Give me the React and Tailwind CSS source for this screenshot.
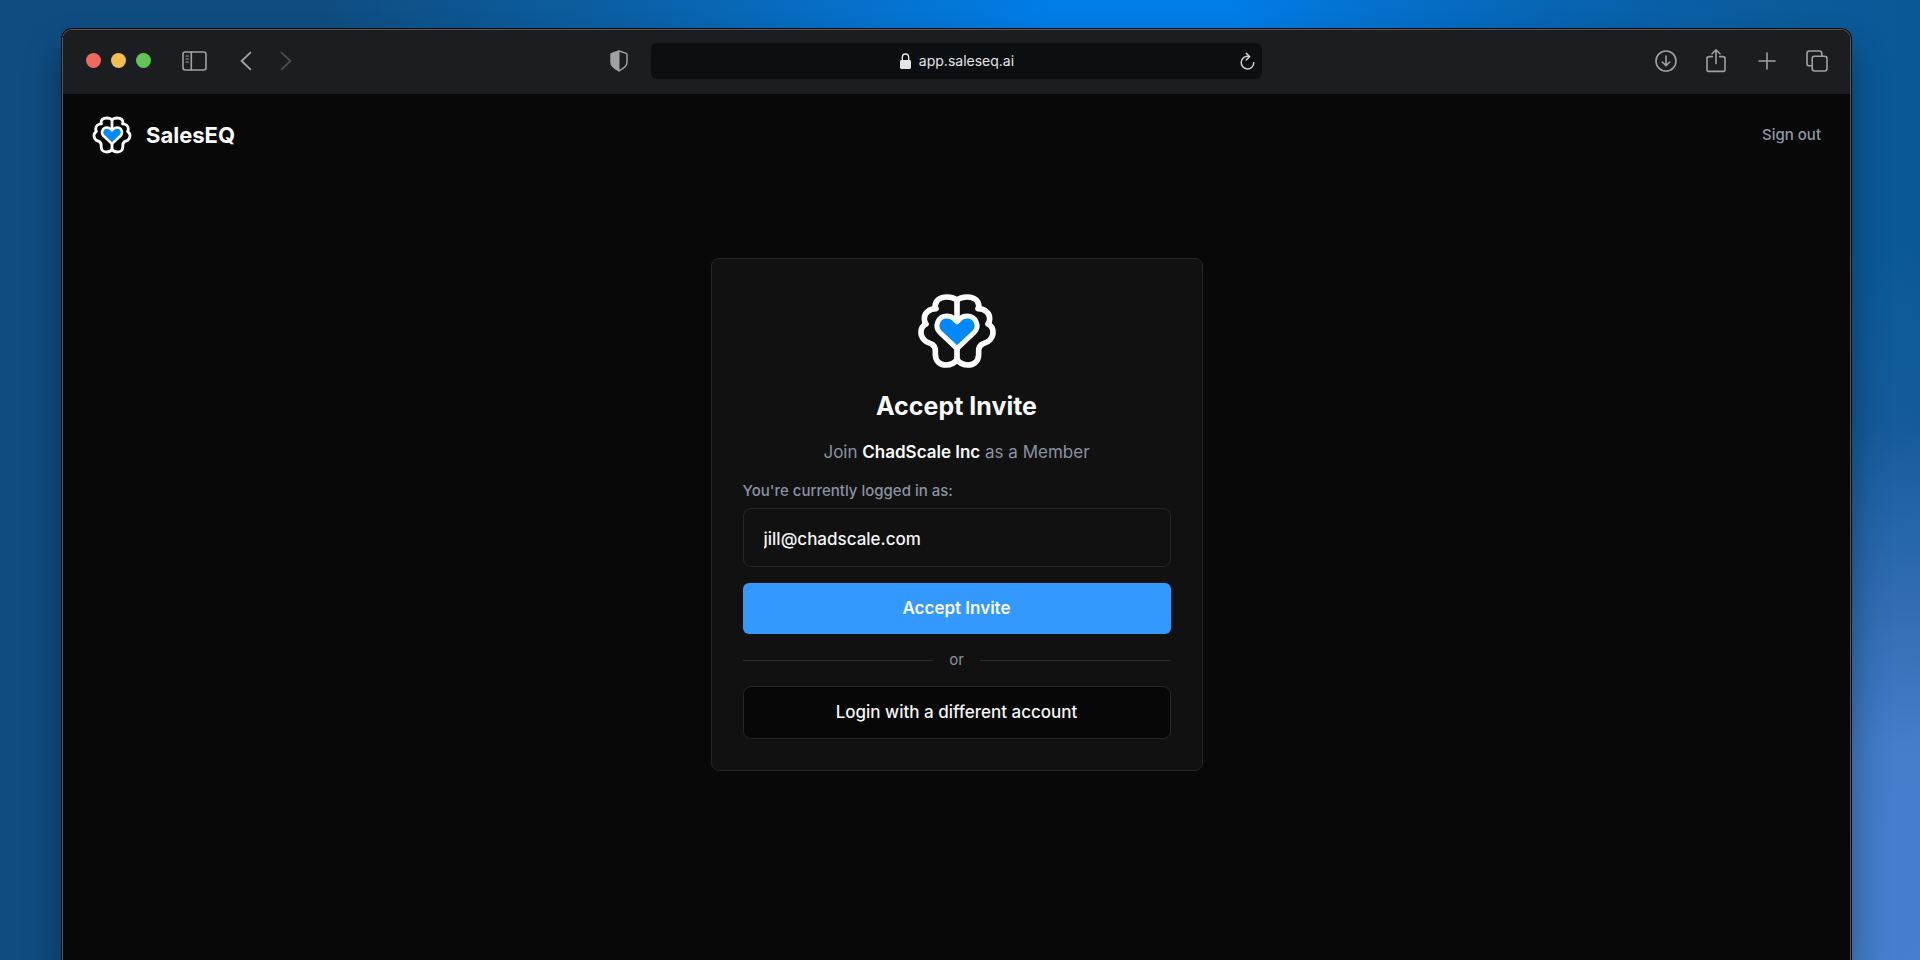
function BrainLogo({ className }) {
  const half =
    "M170 62C163 55 152 52 139 52C119 52 105 63 104 80L107 87C87 87 71 100 72 118C72 124 73 128 77 133C67 138 62 146 62 158C62 175 75 187 91 192C101 196 105 204 105 214V224C105 244 118 256 137 256C152 256 163 250 170 240";
  return (
    <svg viewBox="50 40 240 228" className={className} fill="none" aria-hidden="true">
      <g stroke="#fff" strokeWidth="17" strokeLinejoin="round">
        <path d={half} />
        <path d={half} transform="matrix(-1 0 0 1 340 0)" />
        <path d="M170 60V122M170 205V244" />
        <path
          fill="#0088ff"
          strokeWidth="15"
          d="M170 207L118.5 158.5A29 29 0 0 1 139 109Q153 109 161 117L170 126L179 117Q187 109 201 109A29 29 0 0 1 221.5 158.5Z"
        />
      </g>
    </svg>
  );
}

function Stroke({ viewBox, className, children, width = 1.6 }) {
  return (
    <svg
      viewBox={viewBox}
      className={className}
      fill="none"
      stroke="currentColor"
      strokeWidth={width}
      strokeLinecap="round"
      strokeLinejoin="round"
      aria-hidden="true"
    >
      {children}
    </svg>
  );
}

function Toolbar() {
  return (
    <div className="grid h-16 grid-cols-[1fr_35%_1fr] items-center bg-[#1c1d20] px-[22px] pb-[3px] text-[#a0a1a3]">
      <div className="flex items-center pl-px">
        <div className="flex gap-2.5">
          <button aria-label="Close" className="size-[15px] rounded-full bg-[#ee6a5f]" />
          <button aria-label="Minimize" className="size-[15px] rounded-full bg-[#f5bd4f]" />
          <button aria-label="Zoom" className="size-[15px] rounded-full bg-[#61c454]" />
        </div>
        <button aria-label="Sidebar" className="ml-[31px]">
          <Stroke viewBox="0 0 25 20" className="h-5 w-[25px]">
            <rect x="1" y="1" width="23" height="18" rx="2.2" />
            <path d="M9.3 1V19" />
            <path d="M4 5H6.4M4 8H6.4M4 11H6.4" strokeWidth="1.1" />
          </Stroke>
        </button>
        <button aria-label="Back" className="ml-[33px]">
          <Stroke viewBox="0 0 12 20" className="h-5 w-3" width={1.9}>
            <path d="M10.4 1.6L1.6 10L10.4 18.4" />
          </Stroke>
        </button>
        <button aria-label="Forward" className="ml-7 text-[#4b4c4f]">
          <Stroke viewBox="0 0 12 20" className="h-5 w-3" width={1.9}>
            <path d="M1.6 1.6L10.4 10L1.6 18.4" />
          </Stroke>
        </button>
        <button aria-label="Privacy report" className="mr-[23px] ml-auto">
          <Stroke viewBox="0 0 18 22" className="h-[22px] w-[18px]" width={1.5}>
            <path d="M9 1L16.2 3.4Q17 3.7 17 4.6V12.4C17 16 14 18.2 9 20.9C4 18.2 1 16 1 12.4V4.6Q1 3.7 1.8 3.4Z" />
            <path d="M9 1V20.9C4 18.2 1 16 1 12.4V4.6Q1 3.7 1.8 3.4Z" fill="currentColor" stroke="none" />
            <path d="M9 1V20.9" strokeWidth="1" />
          </Stroke>
        </button>
      </div>
      <div className="flex h-9 items-center rounded-md bg-[#0b0f12] px-[7px] text-[#e4e5e6]">
        <div className="flex flex-1 items-center justify-center gap-2 pl-4">
          <svg viewBox="0 0 11 16" className="h-4 w-[11px]" fill="none" aria-hidden="true">
            <path d="M2.3 8V4.6C2.3 2.6 3.6 1 5.5 1S8.7 2.6 8.7 4.6V8" stroke="currentColor" strokeWidth="1.4" />
            <rect y="7" width="11" height="9" rx="1.4" fill="currentColor" />
          </svg>
          <span className="text-sm">app.saleseq.ai</span>
        </div>
        <button aria-label="Reload" className="text-[#cfd0d1]">
          <Stroke viewBox="0 0 15 18" className="h-[18px] w-[15px]" width={1.5}>
            <path d="M8.4 4.4A6.3 6.3 0 1 0 13.8 10.6" />
            <path d="M6.2 1.2L9.6 4.6L6.2 8" />
          </Stroke>
        </button>
      </div>
      <div className="flex items-center justify-end">
        <button aria-label="Downloads">
          <Stroke viewBox="0 0 22 22" className="size-[22px]">
            <circle cx="11" cy="11" r="10" />
            <path d="M11 6V15.4M7.2 12L11 15.6L14.8 12" />
          </Stroke>
        </button>
        <button aria-label="Share" className="ml-[29px]">
          <Stroke viewBox="0 0 20 26" className="h-[26px] w-5">
            <path d="M6.4 8.6H3Q1 8.6 1 10.6V21.4Q1 23.4 3 23.4H17Q19 23.4 19 21.4V10.6Q19 8.6 17 8.6H13.6" />
            <path d="M10 15.6V2M6 5.8L10 1.8L14 5.8" />
          </Stroke>
        </button>
        <button aria-label="New tab" className="ml-8">
          <Stroke viewBox="0 0 18 18" className="size-[18px]">
            <path d="M9 1V17M1 9H17" />
          </Stroke>
        </button>
        <button aria-label="Tab overview" className="ml-[30px]">
          <Stroke viewBox="0 0 22 22" className="size-[22px]">
            <path d="M6 15.8H3.4Q1 15.8 1 13.4V3.4Q1 1 3.4 1H13.4Q15.8 1 15.8 3.4V6" />
            <rect x="6.2" y="6.2" width="14.8" height="14.8" rx="2.4" />
          </Stroke>
        </button>
      </div>
    </div>
  );
}

function InviteCard() {
  return (
    <form
      className="flex w-[492px] max-w-full flex-col rounded-lg border border-[#262626] bg-[#111111] px-[31px] pt-[34px] pb-[31px]"
      onSubmit={(e) => e.preventDefault()}
    >
      <BrainLogo className="h-[76px] w-20 self-center" />
      <h1 className="mt-5 text-center text-[25px] leading-[34px] font-bold text-[#fafafa]">Accept Invite</h1>
      <p className="mt-[17px] text-center text-[17px] leading-6 text-[#8b92a3]">
        Join <strong className="font-semibold text-[#fafafa]">ChadScale Inc</strong> as a Member
      </p>
      <label htmlFor="email" className="mt-[17px] text-[15px] leading-5 font-medium text-[#8b92a3]">
        You're currently logged in as:
      </label>
      <input
        id="email"
        type="email"
        readOnly
        defaultValue="jill@chadscale.com"
        className="mt-[7px] h-[59px] w-full rounded-lg border border-[#262626] bg-transparent px-5 pt-0.5 text-[17px] font-medium text-[#f5f5f5] outline-none"
      />
      <button type="submit" className="mt-4 h-[51px] rounded-md bg-[#3399ff] text-[17px] font-semibold text-[#fafafa]">
        Accept Invite
      </button>
      <div className="mt-4 flex items-center gap-4 text-[15px] leading-5 text-[#8f929a]">
        <span className="h-px flex-1 bg-[#2c2c2c]" />
        or
        <span className="h-px flex-1 bg-[#2c2c2c]" />
      </div>
      <button type="button" className="mt-4 h-[53px] rounded-lg border border-[#262626] bg-[#070707] text-[17px] font-medium text-[#f5f5f5]">
        Login with a different account
      </button>
    </form>
  );
}

export default function App() {
  return (
    <div className="flex min-h-screen flex-col overflow-hidden bg-[radial-gradient(ellipse_28%_75%_at_100%_100%,#467fcf_0%,#447dca_30%,rgba(56,112,184,0.85)_50%,rgba(34,95,162,0.4)_75%,rgba(18,87,150,0)_100%),linear-gradient(90deg,#0f4c80_0%,#0f4d80_17%,#0b5fa4_32%,#0671cc_45%,#007de8_55%,#007de8_64%,#0570cc_72%,#0863b0_82%,#0b5a99_94%,#0b5896_100%)] pt-[29px] pr-[69px] pl-[62px] font-['Inter',sans-serif] antialiased">
      <div className="flex flex-1 flex-col overflow-hidden rounded-t-[10px] border border-b-0 border-[#55585b] bg-[#080808] shadow-[0_0_0_1px_#080a0c,0_22px_36px_rgba(0,0,0,0.38)]">
        <Toolbar />
        <header className="flex h-[82px] items-center justify-between px-[29px]">
          <a href="#" className="flex items-center gap-3.5">
            <BrainLogo className="h-[38px] w-10" />
            <span className="text-[22px] font-bold text-[#fafafa]">SalesEQ</span>
          </a>
          <a href="#" className="text-[15px] font-medium text-[#9096a6]">
            Sign out
          </a>
        </header>
        <main className="flex flex-1 justify-center px-4 pt-[82px] pb-10">
          <div>
            <InviteCard />
          </div>
        </main>
      </div>
    </div>
  );
}
